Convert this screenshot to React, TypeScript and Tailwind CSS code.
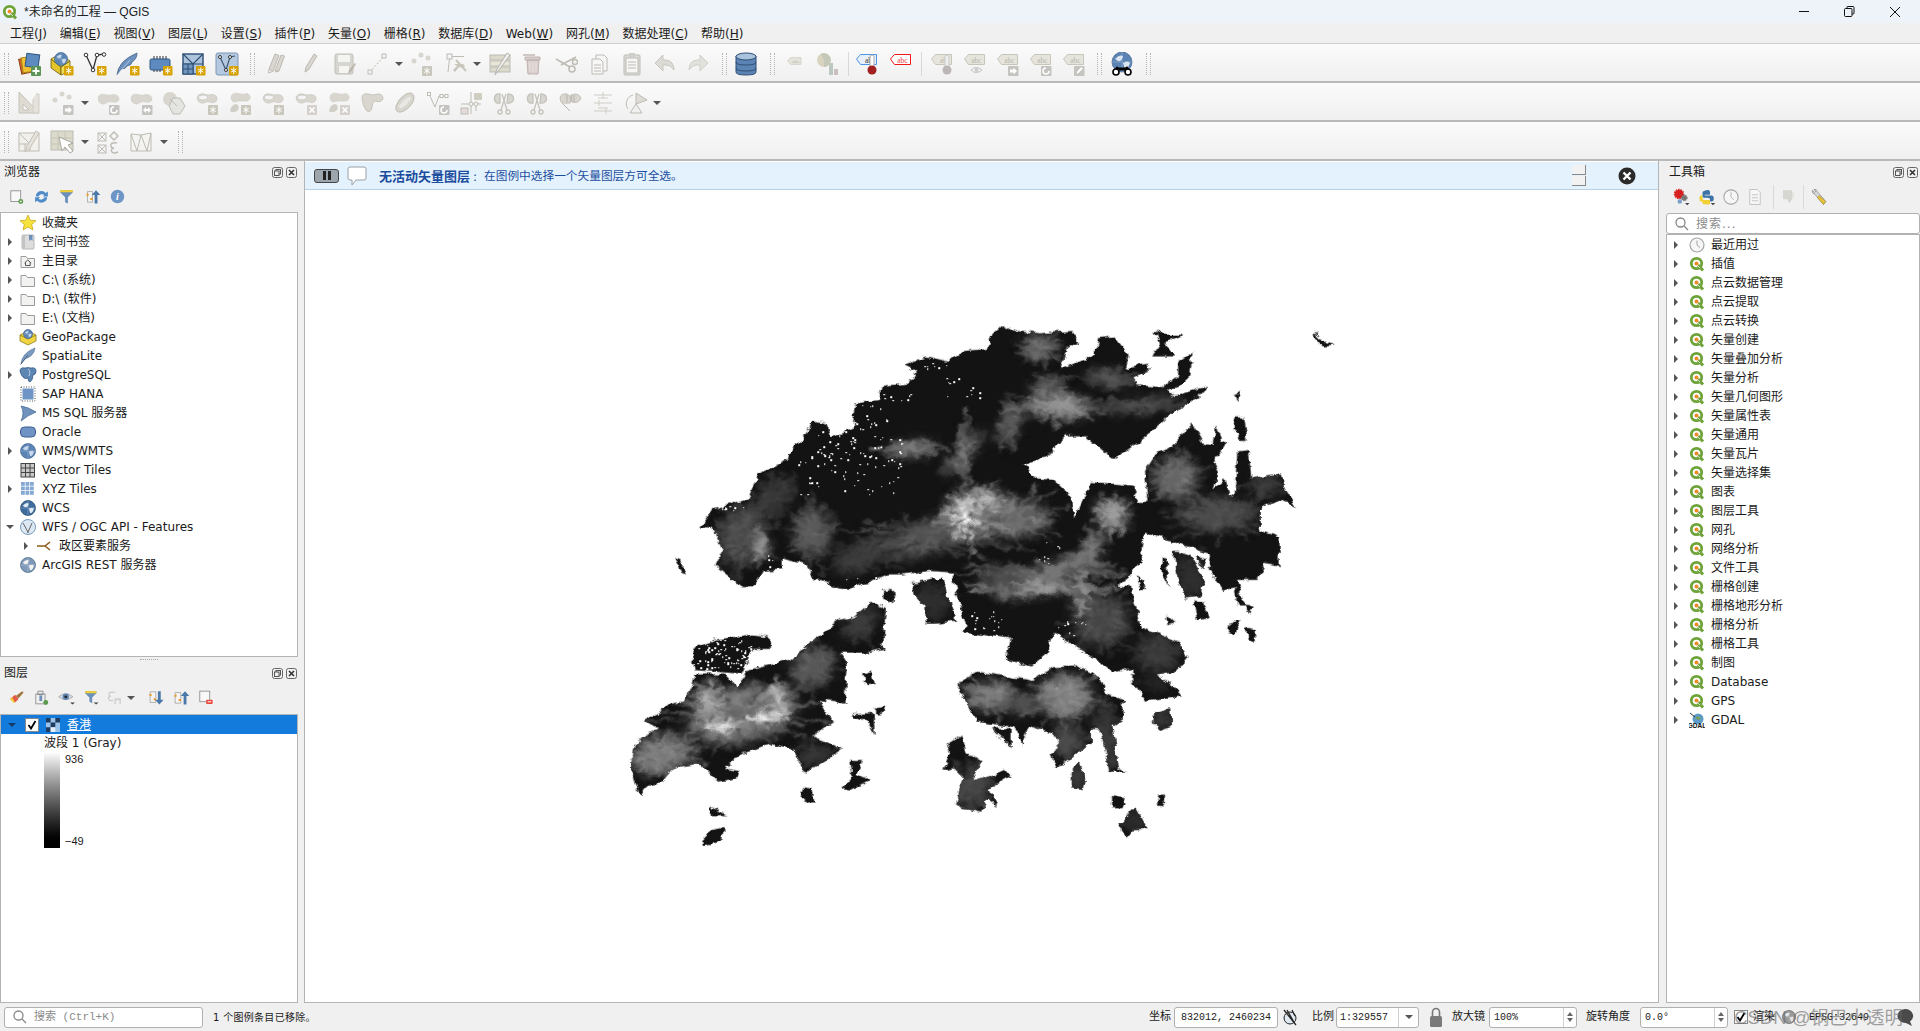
import React from 'react';

// gray colours used by disabled tools
const DF = '#d8d6cf';
const DS = '#bdbbb3';

const Grip = ({ c = 'w-[12px]' }: { c?: string }) => (
  <div className={`flex justify-center shrink-0 ${c}`}>
    <div className="w-[5px] h-[22px] border-x border-dotted border-[#b5b5b5]" />
  </div>
);

const Sep = () => <div className="w-px h-[24px] bg-[#d8d8d8] shrink-0" />;

const Dd = ({ c = 'w-[13px]', dark = false }: { c?: string; dark?: boolean }) => (
  <div className={`flex justify-center shrink-0 ${c}`}>
    <div className={`w-0 h-0 border-x-[4px] border-x-transparent border-t-[4px] ${dark ? 'border-t-[#555]' : 'border-t-[#9a9a9a]'}`} />
  </div>
);

const T = ({ children, c = 'w-[33px]', s = 24 }: { children: React.ReactNode; c?: string; s?: number }) => (
  <div className={`flex items-center justify-center shrink-0 ${c}`}>
    <svg width={s} height={s} viewBox="0 0 24 24">{children}</svg>
  </div>
);

const I16 = ({ children }: { children: React.ReactNode }) => (
  <svg width="18" height="18" viewBox="0 0 18 18" className="shrink-0">{children}</svg>
);

const Badge = () => (
  <g>
    <rect x="14" y="14" width="9.5" height="9.5" rx="1" fill="#d8a200" />
    <path d="M18.7 15.5v6.5M16 17l5.4 3.2M21.4 17L16 20.2" stroke="#fff" strokeWidth="1" />
  </g>
);
const GBadge = () => (
  <g>
    <rect x="13" y="14" width="10" height="10" rx="1" fill="#c9c6bb" />
    <path d="M18 15.5v7M15.2 17.2l5.6 3.4M20.8 17.2l-5.6 3.4" stroke="#fff" strokeWidth="1" />
  </g>
);
const XBadge = () => (
  <g>
    <rect x="13" y="14" width="10" height="10" rx="1" fill="#d6d0cc" />
    <path d="M15.5 16.5l5 5M20.5 16.5l-5 5" stroke="#fff" strokeWidth="1.6" />
  </g>
);
const ArrowBadge = ({ kind }: { kind: 'right' | 'rot' | 'both' | 'pen' }) => (
  <g>
    <rect x="13" y="14" width="10.5" height="10" rx="1" fill="#c4c3bf" />
    {kind === 'right' && <path d="M15 17.5h3.5v-2l3.5 3.5-3.5 3.5v-2H15z" fill="#fff" />}
    {kind === 'rot' && <path d="M21 19a3 3 0 1 1-3-3" fill="none" stroke="#fff" strokeWidth="1.5" />}
    {kind === 'both' && <path d="M14 19l3-3v2h2v-2l3 3-3 3v-2h-2v2z" fill="#fff" />}
    {kind === 'pen' && <path d="M15.5 22l1-3 4-4 1.5 1.5-4 4z" fill="#fff" />}
  </g>
);

const Blob = () => <path d="M2 7Q3 2 9 3.5Q13 5 17 3.5Q23 3.5 23 8.5Q22 12 17 11Q13 10 10 12Q8 14 5 12.5Q2 11 2 7Z" fill={DF} stroke="#cfcdc6" strokeWidth=".6" />;
const Ring = () => (
  <g>
    <path d="M2 7Q3 2 9 3Q13 4.5 17 3.5Q23 4 22 9Q20 13 15 11Q12 10 9 12Q3 13 2 7Z" fill={DF} stroke="#c6c4bc" strokeWidth=".6" />
    <ellipse cx="8" cy="6.5" rx="4.5" ry="2.4" fill="#f4f4f4" stroke="#bdbbb3" strokeWidth=".6" />
  </g>
);
const Parts = () => (
  <g>
    <path d="M3 6Q4 1 10 2.5Q15 4 19 2.5Q23 4 22 8Q20 11 15 10Q10 9.5 7 11Q3 11 3 6Z" fill={DF} stroke="#cfcdc6" strokeWidth=".6" />
    <path d="M2 20Q3 14 8 13Q12 14 10 19Q6 23 2 20Z" fill="#d0cec7" />
  </g>
);
const Abc = ({ fill = '#e6e5dd', stroke = '#c8c6bb', text = '#b7b5ab', label = 'abc' }: { fill?: string; stroke?: string; text?: string; label?: string }) => (
  <g>
    <path d="M2.5 7L6.5 2.5H22.5V12.5H6.5Z" fill={fill} stroke={stroke} strokeWidth="1" />
    <text x="14.5" y="10.5" fontSize="7.5" textAnchor="middle" fontFamily="Liberation Serif" fill={text}>{label}</text>
  </g>
);
const Scissors = () => (
  <g fill="none" stroke="#c4c2ba" strokeWidth="1.3">
    <path d="M8 3Q2 2 2.5 9Q4 13 8 12Z" fill={DF} />
    <path d="M16 3Q22 3 21.5 9Q19 13 15 12Z" fill={DF} />
    <path d="M14 3L9 19M10 3L15 19" />
    <circle cx="8" cy="21" r="2" />
    <circle cx="16" cy="21" r="2" />
  </g>
);
const GlobeArt = ({ cx, cy, r, fill = '#5b84b5', land = '#c8d8ea', stroke = '#3e638f' }: { cx: number; cy: number; r: number; fill?: string; land?: string; stroke?: string }) => (
  <g>
    <circle cx={cx} cy={cy} r={r} fill={fill} stroke={stroke} strokeWidth=".7" />
    <path d={`M${cx - r * 0.7} ${cy - r * 0.3}q${r * 0.4} -${r * 0.5} ${r * 0.8} -${r * 0.3}q-${r * 0.1} ${r * 0.6} -${r * 0.5} ${r * 0.5}zM${cx + r * 0.1} ${cy + r * 0.1}q${r * 0.5} -${r * 0.3} ${r * 0.7} 0q-${r * 0.2} ${r * 0.6} -${r * 0.5} ${r * 0.6}z`} fill={land} />
    <path d={`M${cx} ${cy - r}V${cy + r}M${cx - r} ${cy}H${cx + r}`} stroke={land} strokeWidth=".4" opacity=".7" />
  </g>
);

const Q = () => (
  <svg width="16" height="16" viewBox="0 0 16 16" className="shrink-0">
    <circle cx="7.5" cy="7.5" r="5.2" fill="#fff" stroke="#6ea33a" strokeWidth="2.8" />
    <path d="M9 9l5 5.5" stroke="#6ea33a" strokeWidth="3" />
    <circle cx="7.5" cy="7.5" r="2" fill="#ee8a24" />
    <path d="M8 9l3 3" stroke="#f5f5f5" strokeWidth=".8" />
  </svg>
);

const DockBtns = () => (
  <div className="flex gap-[3px] shrink-0">
    <svg width="11" height="11" viewBox="0 0 11 11"><rect x=".5" y=".5" width="10" height="10" rx="2" fill="none" stroke="#666" /><rect x="4" y="2.5" width="4.5" height="4.5" fill="none" stroke="#555" /><rect x="2.5" y="4" width="4.5" height="4.5" fill="#f0f0f0" stroke="#555" /></svg>
    <svg width="11" height="11" viewBox="0 0 11 11"><rect x=".5" y=".5" width="10" height="10" rx="2" fill="none" stroke="#666" /><path d="M3 3l5 5M8 3l-5 5" stroke="#333" strokeWidth="1.6" /></svg>
  </div>
);

const Arrow = ({ open = false, c = '' }: { open?: boolean; c?: string }) =>
  open ? (
    <div className={`w-0 h-0 border-x-[4px] border-x-transparent border-t-[4px] border-t-[#555] ${c}`} />
  ) : (
    <div className={`w-0 h-0 border-y-[4px] border-y-transparent border-l-[4px] border-l-[#555] ${c}`} />
  );

const Folder = () => <path d="M2 4.5h5l1.5 2H15.5v9H2z" fill="#f2f2f0" stroke="#9b9b9b" />;

const browserRows: { label: string; arrow?: boolean; open?: boolean; child?: boolean; icon: React.ReactNode }[] = [
  { label: '收藏夹', icon: <path d="M9 1l2.3 5.2 5.7.5-4.3 3.7 1.3 5.6L9 13l-5 3 1.3-5.6L1 6.7l5.7-.5z" fill="#f5e23a" stroke="#c9a91f" strokeWidth=".8" /> },
  { label: '空间书签', arrow: true, icon: <g><rect x="3" y="2" width="12" height="14" rx="1" fill="#ddd" stroke="#b8b8b8" /><path d="M3 2h3v14H3z" fill="#c3c3c3" /><path d="M10 2h3.5v6l-1.7-1.5L10 8z" fill="#6d8fbb" /></g> },
  { label: '主目录', arrow: true, icon: <g><Folder /><path d="M5.5 11l3.3-3 3.3 3M6.5 10.5v3h4.7v-3" fill="none" stroke="#444" strokeWidth=".9" /></g> },
  { label: 'C:\\ (系统)', arrow: true, icon: <Folder /> },
  { label: 'D:\\ (软件)', arrow: true, icon: <Folder /> },
  { label: 'E:\\ (文档)', arrow: true, icon: <Folder /> },
  { label: 'GeoPackage', icon: <g><path d="M1 7l8-4 8 4v6l-8 4-8-4z" fill="#f0d543" stroke="#8d7c1a" strokeWidth=".8" /><path d="M1 7l8 4 8-4" fill="none" stroke="#8d7c1a" strokeWidth=".8" /><GlobeArt cx={9} cy={6} r={4.5} /></g> },
  { label: 'SpatiaLite', icon: <g><path d="M2 17Q3 6 16 1Q15 9 6 12Z" fill="#7d9cc2" stroke="#466a96" strokeWidth=".6" /><path d="M1.5 17.5L9 8" stroke="#345" strokeWidth=".6" /></g> },
  { label: 'PostgreSQL', arrow: true, icon: <g><path d="M1 5Q1 1 6 2Q9 1 12 2Q17 1 17 5Q17 9 14 9Q14 14 11 16Q9 16 9 12Q7 13 5 12Q2 10 1 5Z" fill="#5e86b3" stroke="#2f5580" strokeWidth=".7" /><path d="M9 3Q12 5 10 10" fill="none" stroke="#cfe0f0" strokeWidth=".8" /></g> },
  { label: 'SAP HANA', icon: <g><rect x="2" y="2" width="14" height="14" fill="none" stroke="#555" strokeDasharray="1 1.5" /><rect x="3.5" y="3.5" width="11" height="11" fill="#6f95c6" /></g> },
  { label: 'MS SQL 服务器', icon: <path d="M2 2Q9 3 17 8Q9 11 2 17Q6 9 2 2Z" fill="#6f93bd" stroke="#3e638f" strokeWidth=".7" /> },
  { label: 'Oracle', icon: <rect x="1.5" y="4" width="15" height="10" rx="4" fill="#6f93c4" stroke="#3e5f8c" /> },
  { label: 'WMS/WMTS', arrow: true, icon: <GlobeArt cx={9} cy={9} r={7.5} /> },
  { label: 'Vector Tiles', icon: <g><rect x="2" y="2.5" width="13.5" height="13.5" fill="#c9c9c9" stroke="#444" /><path d="M6.5 2.5v13.5M11 2.5v13.5M2 7h13.5M2 11.5h13.5" stroke="#444" /></g> },
  { label: 'XYZ Tiles', arrow: true, icon: <g fill="#86a9d3">{[2, 6.5, 11].flatMap((y) => [2, 6.5, 11].map((x) => <rect key={`${x}-${y}`} x={x} y={y} width="3.8" height="3.8" />))}</g> },
  { label: 'WCS', icon: <GlobeArt cx={9} cy={9} r={7.5} fill="#3f6c9e" land="#dfe9f3" stroke="#244567" /> },
  { label: 'WFS / OGC API - Features', arrow: true, open: true, icon: <g><circle cx="9" cy="9" r="7.5" fill="#dbe7f3" stroke="#7a9cc2" /><path d="M4 5l5 9 4-9" fill="none" stroke="#666" /><circle cx="9" cy="14" r="1" fill="#777" /></g> },
  { label: '政区要素服务', arrow: true, child: true, icon: <path d="M1 9h8M9 9l5-4M9 9l5 4" stroke="#8b5a14" strokeWidth="1.6" fill="none" /> },
  { label: 'ArcGIS REST 服务器', icon: <GlobeArt cx={9} cy={9} r={7.5} fill="#7e99b8" land="#f2f2f2" stroke="#45617f" /> },
];

const toolboxRows = ['插值', '点云数据管理', '点云提取', '点云转换', '矢量创建', '矢量叠加分析', '矢量分析', '矢量几何图形', '矢量属性表', '矢量通用', '矢量瓦片', '矢量选择集', '图表', '图层工具', '网孔', '网络分析', '文件工具', '栅格创建', '栅格地形分析', '栅格分析', '栅格工具', '制图', 'Database', 'GPS'];

const menus: [string, string][] = [['工程', 'J'], ['编辑', 'E'], ['视图', 'V'], ['图层', 'L'], ['设置', 'S'], ['插件', 'P'], ['矢量', 'O'], ['栅格', 'R'], ['数据库', 'D'], ['Web', 'W'], ['网孔', 'M'], ['数据处理', 'C'], ['帮助', 'H']];

// land outlines, traced in the coordinates of the 1568x1568 viewBox
const land = [
  '850,65 880,85 930,92 1000,85 1018,118 990,130 975,190 1050,150 1055,105 1090,100 1120,150 1115,185 1160,175 1165,195 1130,215 1140,235 1195,240 1215,265 1290,235 1270,265 1225,300 1190,340 1130,400 1090,437 1060,410 1030,375 985,375 960,420 900,455 925,490 960,495 1000,540 1005,600 1040,500 1130,510 1140,555 1160,555 1155,470 1180,420 1215,400 1255,340 1280,395 1300,400 1305,345 1325,400 1300,450 1310,475 1300,520 1325,490 1335,540 1345,530 1350,420 1375,415 1380,490 1445,480 1450,520 1475,570 1440,550 1400,570 1400,630 1440,655 1440,735 1410,725 1395,770 1350,770 1365,840 1350,840 1345,790 1320,800 1290,740 1295,700 1155,640 1150,660 1145,720 1115,770 1095,785 1125,790 1145,900 1225,940 1245,985 1220,1020 1180,1030 1215,1060 1235,1090 1155,1105 1130,1055 1130,1015 1085,1025 1050,990 960,915 945,975 915,1005 860,990 870,930 770,915 775,890 745,750 700,745 640,755 610,755 530,795 505,790 470,770 455,770 435,730 385,710 385,740 345,745 325,790 300,790 245,730 260,690 240,630 210,625 240,575 315,545 335,480 400,440 405,410 440,370 450,330 480,340 490,375 535,355 540,285 590,275 600,235 655,230 670,195 645,180 690,155 740,170 770,140 820,135 830,90',
  '200,1030 265,1030 290,1065 310,1020 400,990 430,960 510,880 540,870 575,830 605,850 600,960 560,970 510,970 525,1000 520,1110 465,1100 495,1160 450,1200 515,1235 480,1265 435,1300 410,1240 360,1220 290,1255 265,1290 295,1295 290,1315 250,1325 210,1275 160,1285 130,1330 100,1340 85,1365 65,1290 70,1235 95,1200 125,1180 95,1155 130,1130 150,1110 180,1105 195,1065',
  '195,960 240,935 325,920 360,925 360,960 325,960 300,1028 200,1018',
  '755,1055 800,1022 920,1048 960,1010 1010,1008 1060,1040 1075,1085 1108,1100 1110,1150 1085,1170 1100,1290 1120,1300 1080,1300 1060,1180 1040,1180 1040,1220 1000,1260 965,1290 955,1250 975,1230 960,1190 910,1170 895,1225 880,1175 800,1160 780,1110',
  '735,1220 765,1195 775,1250 810,1265 790,1325 860,1295 870,1310 825,1345 845,1395 820,1370 810,1410 770,1400 755,1385 770,1310 750,1285 725,1295 740,1250',
  '1515,85 1525,110 1555,125 1530,128 1515,105',
  '1175,85 1190,95 1240,95 1200,115 1215,155 1170,155 1185,125',
  '1225,170 1255,145 1255,185 1250,210 1225,240 1195,250 1195,235 1225,210',
  '1345,260 1360,252 1350,280',
  '1345,320 1365,320 1372,385 1355,385 1340,350',
  '160,710 172,715 182,755 172,750',
  '600,798 620,795 625,830 610,838 600,820',
  '660,780 725,765 755,885 710,890 690,890 690,840 665,810',
  '1190,710 1200,710 1205,790 1190,750',
  '1215,690 1225,690 1250,700 1280,770 1275,815 1240,820 1225,770',
  '1265,705 1285,710 1280,740 1265,725',
  '1135,760 1150,770 1155,795 1145,795',
  '1200,865 1220,890 1205,895',
  '1258,830 1280,832 1292,875 1265,880',
  '1335,890 1355,880 1345,920 1332,920',
  '1370,900 1385,905 1388,945 1375,940',
  '1365,838 1385,840 1378,865',
  '555,1030 575,1022 580,1055 565,1060',
  '585,1120 605,1115 600,1135 585,1138',
  '535,1140 580,1135 582,1195 570,1165',
  '530,1265 555,1265 545,1305 570,1320 530,1350 512,1345 535,1310',
  '430,1340 450,1345 455,1385 440,1385 425,1365',
  '235,1392 270,1420 232,1420',
  '240,1458 262,1455 258,1490 220,1500 218,1480',
  '830,1178 870,1178 870,1230',
  '1000,1295 1015,1270 1030,1320 1025,1345 1000,1340',
  '1085,1365 1112,1370 1105,1395 1085,1395',
  '1185,1365 1195,1362 1195,1390 1182,1388',
  '1100,1445 1135,1395 1160,1455 1130,1455 1115,1480',
  '1175,1135 1210,1120 1212,1170 1190,1185 1172,1165',
];

// [cx, cy, rx, ry, rotation, fill] of the high ground, soft blobs under a blur
const relief: [number, number, number, number, number, string][] = [
  [300, 650, 45, 80, 10, '#4a4a4a'], [370, 540, 30, 55, 20, '#383838'], [450, 640, 36, 65, 0, '#585858'], [340, 680, 9, 30, 0, '#9a9a9a'],
  [700, 650, 130, 42, -20, '#505050'], [560, 700, 70, 32, -35, '#3a3a3a'], [870, 600, 80, 50, 0, '#666'], [790, 590, 55, 62, 0, '#8f8f8f'], [772, 597, 20, 34, 0, '#fff'], [820, 545, 24, 20, 0, '#bbb'],
  [660, 410, 50, 16, -12, '#7d7d7d'], [770, 420, 11, 68, 30, '#7a7a7a'], [870, 340, 16, 55, 20, '#5f5f5f'], [930, 128, 32, 30, 0, '#6d6d6d'], [975, 290, 66, 30, 8, '#8f8f8f'], [950, 235, 26, 20, 0, '#5f5f5f'],
  [1080, 215, 45, 17, 15, '#5a5a5a'], [1150, 290, 80, 13, -10, '#505050'], [1220, 490, 44, 55, 0, '#646464'], [1310, 590, 80, 42, 0, '#484848'], [1410, 510, 30, 22, 0, '#424242'],
  [1085, 590, 28, 38, 0, '#9b9b9b'], [1040, 690, 16, 48, 20, '#7a7a7a'], [950, 750, 105, 18, -25, '#777'], [930, 795, 95, 11, -10, '#9c9c9c'], [1020, 810, 9, 40, -15, '#aaa'], [850, 770, 40, 34, 0, '#4c4c4c'],
  [1060, 880, 55, 70, -15, '#444'], [1180, 970, 45, 45, 0, '#383838'], [1180, 1050, 26, 26, 0, '#262626'],
  [300, 1140, 115, 72, -20, '#646464'], [230, 1110, 26, 44, 0, '#a8a8a8'], [380, 1100, 12, 33, -5, '#c4c4c4'], [350, 1148, 28, 11, -5, '#f4f4f4'], [262, 1172, 20, 10, 0, '#fff'], [130, 1250, 66, 48, -25, '#767676'], [450, 1010, 40, 55, 20, '#555'], [550, 890, 26, 46, 30, '#3c3c3c'], [450, 1250, 30, 26, 0, '#3a3a3a'],
  [830, 1090, 46, 36, 0, '#787878'], [985, 1090, 56, 56, 0, '#7a7a7a'], [900, 1110, 36, 24, 0, '#505050'], [990, 1215, 30, 40, 0, '#4a4a4a'], [1075, 1210, 20, 78, -8, '#3c3c3c'],
  [790, 1340, 34, 56, 10, '#454545'], [1015, 1310, 18, 28, 0, '#3c3c3c'], [700, 830, 36, 46, 0, '#2e2e2e'], [1250, 760, 26, 56, 0, '#303030'], [1190, 1150, 22, 26, 0, '#383838'], [1130, 1430, 26, 26, 0, '#2c2c2c'],
];

// white nodata specks over the low ground: [x, y, w, h, count]
const speckAreas: [number, number, number, number, number][] = [
  [420, 360, 220, 175, 100], [540, 285, 70, 85, 16], [600, 240, 60, 40, 8], [655, 170, 80, 20, 8], [730, 190, 75, 80, 14], [250, 565, 65, 15, 8],
  [205, 935, 115, 80, 80], [780, 850, 70, 60, 18], [930, 660, 45, 65, 8], [320, 700, 60, 70, 8], [510, 755, 100, 18, 5], [960, 880, 70, 50, 10],
];

let seed = 42;
const rnd = () => {
  seed = (seed * 16807) % 2147483647;
  return seed / 2147483647;
};

const specks = speckAreas.flatMap(([x, y, w, h, n]) =>
  Array.from({ length: n }, () => [Math.round(x + rnd() * w), Math.round(y + rnd() * h)])
);

// ridges and valleys fanning out of every high spot, the noise filter makes them branch
const spokes = relief.flatMap(([cx, cy, rx, ry, , fill]) => {
  const n = 7 + Math.round(Math.max(rx, ry) / 7);
  return Array.from({ length: n * 2 }, (_, i) => {
    const a = (i / (n * 2)) * Math.PI * 2 + rnd() * 0.3;
    const len = 1.1 + rnd() * 0.9;
    const ridge = i % 2 === 0;
    return {
      x1: cx + Math.cos(a) * rx * (ridge ? 0.1 : 0.45),
      y1: cy + Math.sin(a) * ry * (ridge ? 0.1 : 0.45),
      x2: cx + Math.cos(a) * rx * len,
      y2: cy + Math.sin(a) * ry * len,
      stroke: ridge ? fill : '#0c0c0c',
      ridge,
    };
  });
});

const HongKong = () => (
  <svg viewBox="0 0 1568 1568" preserveAspectRatio="none" className="absolute left-[295px] top-[139px] w-[740px] h-[570px]">
    <defs>
      <clipPath id="land">
        {land.map((p, i) => <polygon key={i} points={p} />)}
      </clipPath>
      <filter id="soft" x="-10%" y="-10%" width="120%" height="120%" colorInterpolationFilters="sRGB">
        <feGaussianBlur stdDeviation="14" result="b" />
        <feTurbulence type="fractalNoise" baseFrequency="0.035" numOctaves="3" seed="3" result="n" />
        <feDisplacementMap in="b" in2="n" scale="26" xChannelSelector="R" yChannelSelector="G" />
        <feComponentTransfer>
          <feFuncR type="linear" slope="1.3" />
          <feFuncG type="linear" slope="1.3" />
          <feFuncB type="linear" slope="1.3" />
        </feComponentTransfer>
      </filter>
      <filter id="ridge" x="-10%" y="-10%" width="120%" height="120%" colorInterpolationFilters="sRGB">
        <feTurbulence type="fractalNoise" baseFrequency="0.05" numOctaves="3" seed="11" result="n" />
        <feDisplacementMap in="SourceGraphic" in2="n" scale="30" xChannelSelector="R" yChannelSelector="G" />
        <feGaussianBlur stdDeviation="3" />
      </filter>
      <filter id="rough" x="-5%" y="-5%" width="110%" height="110%" colorInterpolationFilters="sRGB">
        <feTurbulence type="fractalNoise" baseFrequency="0.045" numOctaves="4" seed="7" result="n" />
        <feDisplacementMap in="SourceGraphic" in2="n" scale="18" xChannelSelector="R" yChannelSelector="G" />
      </filter>
    </defs>
    <g filter="url(#rough)">
      <g clipPath="url(#land)">
        <rect width="1568" height="1568" fill="#131313" />
        <g filter="url(#soft)">
          {relief.map(([cx, cy, rx, ry, r, fill], i) => (
            <ellipse key={i} cx={cx} cy={cy} rx={rx} ry={ry} fill={fill} transform={`rotate(${r} ${cx} ${cy})`} />
          ))}
        </g>
        <g filter="url(#ridge)" strokeLinecap="round">
          {spokes.map((l, i) => (
            <line key={i} x1={l.x1} y1={l.y1} x2={l.x2} y2={l.y2} stroke={l.stroke} strokeWidth={l.ridge ? 6 : 4} strokeOpacity={l.ridge ? 0.8 : 0.4} />
          ))}
        </g>
      </g>
    </g>
    <g fill="#fff" shapeRendering="crispEdges">
      {specks.map(([x, y], i) => <rect key={i} x={x} y={y} width="3.2" height="4" />)}
    </g>
  </svg>
);

const Spin = ({ value, c }: { value: string; c: string }) => (
  <div className={`flex items-center h-[21px] bg-white border border-[#b0b0b0] rounded-[3px] shrink-0 ${c}`}>
    <span className="flex-1 pl-[4px] text-[10px] font-['Liberation_Mono','Noto_Sans_CJK_SC',monospace] text-[#222]">{value}</span>
    <div className="w-[13px] h-full border-l border-[#d0d0d0] flex flex-col items-center justify-center gap-[2px]">
      <div className="w-0 h-0 border-x-[3.5px] border-x-transparent border-b-[4px] border-b-[#666]" />
      <div className="w-0 h-0 border-x-[3.5px] border-x-transparent border-t-[4px] border-t-[#666]" />
    </div>
  </div>
);

const Toolbar = ({ children }: { children: React.ReactNode }) => (
  <div className="h-[39px] shrink-0 flex items-center pt-[2px] bg-gradient-to-b from-[#fbfbfb] to-[#f0f0f0] border-b-2 border-[#b9b9b9]">{children}</div>
);

export default function App() {
  return (
    <div className="w-full h-screen flex flex-col overflow-hidden bg-[#f0f0f0] text-[12px] text-[#1a1a1a] font-['DejaVu_Sans','Noto_Sans_CJK_SC',sans-serif]">
      {/* title */}
      <div className="h-[23px] shrink-0 bg-[#eef3fa] flex items-center pl-[2px]">
        <Q />
        <span className="ml-[6px] text-[#222] font-['Liberation_Sans','Noto_Sans_CJK_SC',sans-serif]">*未命名的工程 — QGIS</span>
        <div className="ml-auto flex items-center">
          <div className="w-[45px] flex justify-center"><div className="w-[10px] h-px bg-[#111]" /></div>
          <div className="w-[46px] flex justify-center">
            <svg width="11" height="11" viewBox="0 0 11 11" fill="none" stroke="#111"><rect x=".5" y="2.5" width="7.5" height="8" rx="1" /><path d="M3 2.5V1a.5.5 0 0 1 .5-.5H9a1 1 0 0 1 1 1V7a1 1 0 0 1-1 1H8" /></svg>
          </div>
          <div className="w-[46px] flex justify-center">
            <svg width="12" height="12" viewBox="0 0 12 12" stroke="#111"><path d="M1 1l10 10M11 1L1 11" /></svg>
          </div>
          <div className="w-[2px]" />
        </div>
      </div>

      {/* menu */}
      <div className="h-[21px] shrink-0 flex items-center pl-[10px] pt-px gap-[12.8px] border-b border-[#d0d0d0] bg-[#f0f0f0]">
        {menus.map(([name, key]) => (
          <span key={key} className="whitespace-nowrap">{name}(<u>{key}</u>)</span>
        ))}
      </div>

      <Toolbar>
        <Grip />
        <T>
          <rect x="3" y="6" width="12" height="15" fill="#d9662b" stroke="#8c3c12" transform="rotate(-12 9 13)" />
          <rect x="5" y="5" width="12" height="15" fill="#f0c030" stroke="#a88418" transform="rotate(-8 11 12)" />
          <rect x="9" y="2" width="13" height="13" fill="#5d8bc0" stroke="#2f5580" transform="rotate(8 15 8)" />
          <rect x="14" y="14" width="10" height="10" rx="1" fill="#5a9456" />
          <path d="M19 15.5v7M15.5 19h7" stroke="#fff" strokeWidth="1.8" />
        </T>
        <T>
          <path d="M1 7l10 8v8L1 16z" fill="#e5c52c" stroke="#6b5c10" strokeWidth=".8" />
          <path d="M11 15l9-6v10l-9 4z" fill="#f2dc50" stroke="#6b5c10" strokeWidth=".8" />
          <path d="M1 7l9-5 10 7-9 6z" fill="#ecd544" stroke="#6b5c10" strokeWidth=".8" />
          <GlobeArt cx={11} cy={7} r={6.5} />
          <Badge />
        </T>
        <T>
          <path d="M3 3l7 15 4-15 7-1" fill="none" stroke="#333" strokeWidth="1.3" />
          <circle cx="3" cy="3" r="1.8" fill="#fff" stroke="#333" /><circle cx="10" cy="18" r="1.8" fill="#fff" stroke="#333" /><circle cx="14" cy="3" r="1.8" fill="#fff" stroke="#333" /><circle cx="21" cy="2.5" r="1.8" fill="#fff" stroke="#333" />
          <Badge />
        </T>
        <T>
          <path d="M1 23Q2 9 21 1Q21 7 16 10Q16 13 11 14Q10 17 5 17Z" fill="#6d92bf" stroke="#35597f" strokeWidth=".7" />
          <path d="M1 23L14 8" stroke="#c7d8ea" strokeWidth=".7" />
          <Badge />
        </T>
        <T>
          <path d="M5 4v3M8 4v3M11 4v3M14 4v3M17 4v3M5 17v3M8 17v3M11 17v3" stroke="#333" />
          <rect x="1" y="7" width="20" height="11" rx="1.5" fill="#5d8bc0" stroke="#2f5580" />
          <Badge />
        </T>
        <T>
          <rect x="1" y="2" width="20" height="20" fill="#aec4dc" stroke="#2d4e75" strokeWidth="1.4" />
          <path d="M1 2l10 10 10-10M1 12h20M11 12v10" fill="none" stroke="#2d4e75" strokeWidth="1.2" />
          <path d="M1 12h10v10H1z" fill="#7096bf" stroke="#2d4e75" /><path d="M1 17h10M6 12v10" stroke="#2d4e75" />
          <Badge />
        </T>
        <T>
          <rect x="1" y="1" width="22" height="22" rx="2" fill="#b4c8df" stroke="#7d97b5" />
          <path d="M5 5l6 13 4-13 5-1" fill="none" stroke="#3c5878" strokeWidth="1.2" />
          <circle cx="5" cy="5" r="1.5" fill="#fff" stroke="#333" /><circle cx="11" cy="18" r="1.5" fill="#fff" stroke="#333" /><circle cx="15" cy="5" r="1.5" fill="#fff" stroke="#333" />
          <Badge />
        </T>
        <Grip c="w-[18px]" />
        <T><path d="M3 17L9 2l4 1.5-6 16zM9 19l6-16 3.5 1L13 19z" fill={DF} stroke={DS} /><path d="M3 17l-.5 4 4-1.500M9 20l4-1" stroke={DS} fill="none" /></T>
        <T><path d="M6 20l1-5L15 2l3 2-8 13z" fill={DF} stroke={DS} /><path d="M6 20l4-3" stroke={DS} /></T>
        <T><rect x="3" y="2" width="18" height="20" rx="1.5" fill="#d7d5cf" stroke="#c2c0b9" /><rect x="6" y="3" width="12" height="7" fill="#f4f4f0" /><rect x="7" y="14" width="10" height="7" fill="#f4f4f0" /><path d="M16 22l1-4 6-7 1 1-5 8z" fill="#bcb8ad" /></T>
        <T><path d="M5 20L19 4" stroke={DS} strokeDasharray="2 1.5" /><rect x="3" y="18" width="4" height="4" fill="#f4f4f4" stroke={DS} /><rect x="17" y="2" width="4" height="4" fill="#f4f4f4" stroke={DS} /></T>
        <Dd c="w-[11px]" dark />
        <T><circle cx="12" cy="3" r="2.5" fill={DF} /><circle cx="19" cy="6" r="2.5" fill={DF} /><circle cx="5" cy="9" r="2.5" fill={DF} /><GBadge /></T>
        <div className="w-[9px] shrink-0" />
        <T c="w-[24px]"><rect x="1" y="2" width="5" height="5" fill="#f4f4f4" stroke={DS} /><path d="M3.5 7L2 20M6 4.5h12" stroke={DS} /><path d="M8 12h9l2 2-2 2-4-1-4 5-2-2 4-4z" fill="#c9c6bb" /><path d="M10 8l10 11" stroke="#c9c6bb" strokeWidth="2" /></T>
        <Dd dark />
        <T><rect x="2" y="3" width="20" height="5" fill="#dcdacb" stroke={DS} /><rect x="2" y="9" width="20" height="5" fill="#e8e6d8" stroke={DS} /><rect x="2" y="15" width="20" height="5" fill="#dcdacb" stroke={DS} /><path d="M7 23l2-6L19 1l3 2-11 15z" fill="#eee" stroke="#b5b3ab" /></T>
        <T><path d="M4 5h15v3H4zM6 8l1 14h10l1-14z" fill="#d9cfcc" stroke="#bfb3af" /><path d="M2 2h12v2H2z" fill="#cfc7c4" /><path d="M9 10v10M12 10v10M15 10v10" stroke="#ebe4e2" /></T>
        <T><path d="M2 7l14 8M22 5L7 13" stroke={DS} strokeWidth="1.5" /><circle cx="18" cy="17" r="3" fill="none" stroke={DS} strokeWidth="1.5" /><circle cx="21" cy="10" r="2.5" fill="none" stroke={DS} strokeWidth="1.5" /></T>
        <T><path d="M9 3h8l3 3v13H9z" fill="#f6f6f6" stroke={DS} /><path d="M5 7h8l3 3v12H5z" fill="#f6f6f6" stroke={DS} /><path d="M7 13h7M7 16h7M7 19h7" stroke={DS} /></T>
        <T><rect x="4" y="3" width="16" height="20" rx="1" fill="#dcdcd8" stroke={DS} /><rect x="6" y="6" width="12" height="15" fill="#f6f6f6" stroke={DS} /><rect x="9" y="1" width="6" height="4" fill="#cfcfca" /><path d="M8 10h8M8 13h8M8 16h8" stroke={DS} /></T>
        <T><path d="M2 11l8-8v5h3q8 1 8 10q-3-5-8-5h-3v6z" fill="#dcdad4" stroke="#c9c7c0" /></T>
        <T><path d="M22 11l-8-8v5h-3q-8 1-8 10q3-5 8-5h3v6z" fill="#e2e2dc" stroke="#cfcfc8" /></T>
        <Grip c="w-[20px]" />
        <T c="w-[24px]">
          <path d="M2 4v16q0 3 10 3t10-3V4z" fill="#5b84b5" stroke="#2f4d72" />
          <ellipse cx="12" cy="4.5" rx="10" ry="3.5" fill="#a9c2de" stroke="#2f4d72" />
          <path d="M2 10q0 3 10 3t10-3M2 16q0 3 10 3t10-3" fill="none" stroke="#2f4d72" />
        </T>
        <Grip c="w-[28px]" />
        <T c="w-[16px]"><Abc /></T>
        <div className="w-[6px] shrink-0" />
        <T c="w-[40px]"><circle cx="8" cy="8" r="7" fill="#d8d4c0" /><path d="M8 8l-3-6a7 7 0 0 1 9 3zM8 8l6-3a7 7 0 0 1-6 10z" fill="#c3c8b8" /><rect x="13" y="11" width="4" height="12" fill="#bcc7c0" /><rect x="18" y="17" width="4" height="6" fill="#c9c0c0" /></T>
        <Sep />
        <T c="w-[34px]">
          <Abc fill="#e6f0fb" stroke="#4b94e8" text="#333" label="ab" />
          <rect x="16" y="3" width="4" height="14" rx="2" fill="#fff" stroke="#aaa" /><circle cx="18" cy="18" r="4.5" fill="#a32020" />
        </T>
        <T><Abc fill="#fff" stroke="#f01818" text="#f04040" /></T>
        <div className="w-[5px] shrink-0" />
        <Sep />
        <div className="w-[2.5px] shrink-0" />
        <T><Abc label="ab" /><rect x="16" y="3" width="4" height="14" rx="2" fill="#eee" stroke="#ccc" /><circle cx="18" cy="18" r="4.5" fill="#bdb6b6" /></T>
        <T><Abc /><path d="M9 18q5-5 11 0q-6 5-11 0z" fill="#f5f5f5" stroke="#c0c0c0" /><circle cx="14.5" cy="18" r="2" fill="#ccc" /></T>
        <T><Abc /><ArrowBadge kind="right" /></T>
        <T><Abc /><ArrowBadge kind="rot" /></T>
        <T><Abc /><ArrowBadge kind="pen" /></T>
        <Grip c="w-[20px]" />
        <T c="w-[24px]">
          <GlobeArt cx={12} cy={10} r={10} fill="#5b84b5" land="#dbe5f0" />
          <path d="M8 15l-3 5M16 15l3 5M9 17h6" stroke="#000" strokeWidth="3" />
          <circle cx="6" cy="20" r="3" fill="#fff" stroke="#000" strokeWidth="1.6" /><circle cx="18" cy="20" r="3" fill="#fff" stroke="#000" strokeWidth="1.6" />
        </T>
        <Grip c="w-[30px]" />
      </Toolbar>

      <Toolbar>
        <Grip />
        <T><path d="M2 1l20 21H2z" fill="#dedbd3" stroke="#c5c2b9" /><path d="M6 13l6 6H6z" fill="#f4f4f4" stroke="#c5c2b9" /><path d="M16 8v14h6V3h-3" fill="#e4e2da" stroke="#cfcdc4" /></T>
        <T><circle cx="12" cy="3" r="2.5" fill={DF} /><circle cx="19" cy="6" r="2.5" fill={DF} /><circle cx="5" cy="9" r="2.5" fill={DF} /><ArrowBadge kind="right" /></T>
        <Dd dark />
        <T><Blob /><ArrowBadge kind="rot" /></T>
        <T><Blob /><ArrowBadge kind="both" /></T>
        <T><circle cx="8" cy="8" r="7" fill={DF} /><path d="M11 7h7l5 8-5 8h-7l-4-8z" fill="#e4e4e0" stroke={DS} /><path d="M8 8l7 7" stroke={DS} /></T>
        <T><Ring /><GBadge /></T>
        <T><Parts /><GBadge /></T>
        <T><Ring /><GBadge /></T>
        <T><Ring /><XBadge /></T>
        <T><Parts /><XBadge /></T>
        <T><path d="M2 7Q2 2 8 3Q13 5 18 3Q23 3 23 8Q21 12 15 10Q12 11 12 16Q11 22 7 20Q3 16 2 7Z" fill={DF} stroke="#c6c4bc" /></T>
        <T><path d="M3 15Q5 8 13 3Q20 0 21 6Q21 12 14 18Q7 23 4 20Q2 18 3 15Z" fill={DF} stroke="#bdbbb3" /><path d="M6 15Q9 10 15 6Q18 5 18 8Q15 13 9 17Q6 18 6 15Z" fill="#e9e8e3" /></T>
        <T><path d="M3 3l6 13 4-11h6" fill="none" stroke={DS} /><rect x="1.5" y="1.5" width="3" height="3" fill="#fff" stroke={DS} /><rect x="14" y="3.5" width="3" height="3" fill="#fff" stroke={DS} /><rect x="19" y="3.5" width="3" height="3" fill="#fff" stroke={DS} /><ArrowBadge kind="rot" /></T>
        <T><path d="M12 1v22M2 13h20M17 12v8" stroke={DS} /><circle cx="12" cy="13" r="2" fill="#f4f4f4" stroke={DS} /><circle cx="17" cy="13" r="2" fill="#f4f4f4" stroke={DS} /><rect x="15" y="2" width="8" height="7" rx="1" fill="#d0cdc3" /><rect x="2" y="17" width="7" height="6" fill="#e4dcda" stroke={DS} /></T>
        <T><Scissors /></T>
        <T><Scissors /></T>
        <T><path d="M2 7Q3 2 9 3Q12 4 13 8L12 12Q6 13 3 11Z" fill={DF} stroke="#c4c2ba" /><path d="M13 4Q20 1 23 7Q21 13 14 11Z" fill={DF} stroke="#c4c2ba" /><path d="M9 4v7M13 4v7M16 4v7M4 12l8 8" stroke="#b5b3ab" /></T>
        <T><path d="M3 4h18M3 12h18M3 20h18M12 1v7M8 9v6M15 17v6M7 7h10M7 17h10" stroke="#cfcdc6" /></T>
        <T><path d="M9 4a9 9 0 0 0-5 14" fill="none" stroke={DS} /><path d="M12 2l11 7-11 4z" fill="#dedcd6" stroke={DS} /><path d="M12 13l6 9H6z" fill="#f0f0f0" stroke={DS} /></T>
        <Dd c="w-[9px]" dark />
      </Toolbar>

      <Toolbar>
        <Grip />
        <T><rect x="2" y="3" width="20" height="18" fill="#f1f0ea" stroke={DS} /><path d="M2 3l11 11M2 14h11v7M8 14v7" stroke={DS} fill="none" /><path d="M8 22l2-6L19 1l3 2-9 15z" fill="#e4e2da" stroke="#c5c2b9" /></T>
        <T><rect x="1" y="1" width="22" height="19" fill="#dbdacb" stroke={DS} /><path d="M1 8h22M8 1v19M15 1v19M1 14h22" stroke="#c8c6b8" /><path d="M9 7l14 6-5 2 5 6-3 2-5-6-3 4z" fill="#fff" stroke="#a9a79f" /></T>
        <Dd dark />
        <T><rect x="2" y="3" width="8" height="8" fill="#f4f4f4" stroke={DS} /><path d="M2 3l8 8M10 3l-8 8" stroke={DS} /><rect x="2" y="15" width="8" height="8" fill="#f4f4f4" stroke={DS} /><path d="M2 15l8 8M10 15l-8 8" stroke={DS} /><path d="M18 2l4 4-4 4-4-4zM21 13q-7-1-6 3q0 2 3 2q-4 1-2 4q2 2 6 0" fill="none" stroke={DS} strokeWidth="1.4" /></T>
        <T><path d="M2 4l10 1 10-2v18H2zM2 4l6 17 4-16 6 16M22 3l-4 18" fill="#f4f4f0" stroke={DS} /></T>
        <Dd dark />
        <Grip c="w-[20px]" />
      </Toolbar>

      {/* main */}
      <div className="flex-1 flex min-h-0">
        {/* left docks */}
        <div className="w-[304px] shrink-0 flex flex-col pr-[6px]">
          <div className="h-[22px] shrink-0 flex items-center justify-between pl-[4px] pr-[1px]"><span>浏览器</span><DockBtns /></div>
          <div className="h-[29px] shrink-0 flex items-center pl-[4px] pb-[3px]">
            <T s={17} c="w-[25px]"><rect x="4" y="4" width="14" height="15" fill="#f8f8f8" stroke="#777" /><circle cx="18" cy="19" r="3.5" fill="#5b9a4c" /><path d="M16.5 19h3M18 17.5v3" stroke="#fff" /></T>
            <T s={17} c="w-[25px]"><path d="M4 12a8 8 0 0 1 14-5l3-2v7h-7l2-2a5 5 0 0 0-8 2zM20 13a8 8 0 0 1-14 5l-3 2v-7h7l-2 2a5 5 0 0 0 8-2z" fill="#4f8bc8" /></T>
            <T s={17} c="w-[25px]"><path d="M3 3h18v3l-7 7v9l-4-2v-7L3 6z" fill="#6b90bc" /><path d="M3 3h18v3H3z" fill="#f2cf33" /></T>
            <T s={17} c="w-[26px]"><path d="M5 5h7v15H5z" fill="#f4f4f4" stroke="#999" /><rect x="3.5" y="8" width="3" height="3" fill="#ee9a24" /><rect x="9" y="14" width="3" height="3" fill="#ee9a24" /><path d="M15 22V10h-4l6-7 6 7h-4v12z" fill="#4a78a8" /></T>
            <T s={17} c="w-[25px]"><circle cx="12" cy="12" r="9.5" fill="#6d96c6" /><text x="12" y="17" fontSize="14" fontStyle="italic" fontWeight="bold" textAnchor="middle" fill="#fff" fontFamily="Liberation Serif">i</text></T>
          </div>
          <div className="h-[445px] shrink-0 bg-white border border-[#b4b4b4] overflow-hidden">
            {browserRows.map((r) => (
              <div key={r.label} className="h-[19px] flex items-center relative whitespace-nowrap">
                <div className={`flex justify-center shrink-0 ${r.child ? 'w-[35px] pl-[14px]' : 'w-[17px]'}`}>
                  {r.arrow && <Arrow open={r.open} />}
                </div>
                <div className={r.child ? '' : 'ml-px'}><I16>{r.icon}</I16></div>
                <span className="ml-[5px]">{r.label}</span>
              </div>
            ))}
          </div>
          <div className="h-[5px] shrink-0 flex justify-center items-center"><div className="w-[18px] border-t border-dotted border-[#aaa]" /></div>
          <div className="h-[22px] shrink-0 flex items-center justify-between pl-[4px] pr-[1px]"><span>图层</span><DockBtns /></div>
          <div className="h-[30px] shrink-0 flex items-center pl-[4px] pb-[3px]">
            <T s={17} c="w-[25px]"><path d="M3 14l7-6 5 6-5 5z" fill="#e4584a" /><path d="M3 14l4 5 3 0-4-7z" fill="#f2cf33" /><path d="M11 10l9-7 2 2-7 8z" fill="#a0743a" /></T>
            <T s={17} c="w-[25px]"><rect x="4" y="7" width="13" height="14" fill="#f0f0f0" stroke="#777" /><rect x="7" y="3" width="7" height="5" fill="none" stroke="#777" /><rect x="9" y="9" width="4" height="8" fill="#7090b5" /><circle cx="18" cy="19" r="3.5" fill="#5b9a4c" /></T>
            <T s={17} c="w-[25px]"><path d="M1 11q10-9 20 0q-10 8-20 0z" fill="#d5dce5" stroke="#999" /><circle cx="11" cy="11" r="4.5" fill="#5f86b4" /><circle cx="11" cy="11" r="2" fill="#222" /><path d="M17 19h7l-3.5 3z" fill="#444" /></T>
            <T s={17} c="w-[24px]"><path d="M3 3h16v3l-6 6v8l-4-2v-6L3 6z" fill="#6b90bc" /><path d="M3 3h16v3H3z" fill="#f2cf33" /><path d="M15 19h7l-3.5 3z" fill="#444" /></T>
            <T s={17} c="w-[22px]"><path d="M13 5q-9-2-9 3q0 2 3 2q-5 1-3 5q2 2 6 1" fill="none" stroke="#c9c9c9" strokeWidth="1.6" /><path d="M12 13h9v8h-2v-5h-5v5h-2z" fill="#d0d0d0" /></T>
            <Dd dark c="w-[12px]" />
            <div className="w-[6px] shrink-0" />
            <T s={17} c="w-[26px]"><path d="M3 4h8v15H3z" fill="#f4f4f4" stroke="#999" /><rect x="2" y="7" width="3" height="3" fill="#ee9a24" /><rect x="8" y="13" width="3" height="3" fill="#ee9a24" /><path d="M14 3v12h-4l6 7 6-7h-4V3z" fill="#4a78a8" /></T>
            <T s={17} c="w-[24px]"><path d="M3 5h8v15H3z" fill="#f4f4f4" stroke="#999" /><rect x="2" y="8" width="3" height="3" fill="#ee9a24" /><rect x="8" y="14" width="3" height="3" fill="#ee9a24" /><path d="M15 22V10h-4l6-7 6 7h-4v12z" fill="#4a78a8" /></T>
            <T s={17} c="w-[25px]"><rect x="4" y="3" width="14" height="15" fill="#f8f8f8" stroke="#777" /><rect x="13" y="15" width="9" height="6" rx="1" fill="#e8483c" /><path d="M15 18h5" stroke="#fff" strokeWidth="1.4" /></T>
          </div>
          <div className="flex-1 bg-white border border-[#b4b4b4] overflow-hidden">
            <div className="h-[19px] flex items-center bg-[#137bdc]">
              <Arrow open c="ml-[7px] !border-t-[#123a66]" />
              <div className="ml-[9px] w-[14px] h-[14px] bg-white border border-[#888] flex items-center justify-center">
                <svg width="10" height="10" viewBox="0 0 10 10"><path d="M1.5 5l2.5 3.5L8.5 1" fill="none" stroke="#000" strokeWidth="1.8" /></svg>
              </div>
              <svg width="14" height="14" viewBox="0 0 14 14" className="ml-[7px]">
                <rect width="14" height="14" fill="#9cc3ea" />
                <path d="M0 0h4.600v4.600H0zM9.300 0H14v4.600H9.300zM4.600 4.600h4.700v4.700H4.600zM0 9.300h4.600V14H0z" fill="#1f3c5e" />
                <path d="M4.600 9.300h4.700V14H4.600z" fill="#e6eef7" />
              </svg>
              <span className="ml-[7px] text-white underline">香港</span>
            </div>
            <div className="h-[18px] flex items-center pl-[43px] whitespace-nowrap">波段 1 (Gray)</div>
            <div className="flex pl-[43px]">
              <div className="w-[16px] h-[96px] bg-gradient-to-b from-white to-black" />
              <div className="h-[96px] ml-[5px] py-[1px] flex flex-col justify-between text-[11px] leading-[12px] font-['Liberation_Sans',sans-serif]">
                <span>936</span>
                <span>−49</span>
              </div>
            </div>
          </div>
        </div>

        {/* map */}
        <div className="flex-1 min-w-0 flex flex-col bg-white border-x border-b border-[#b4b4b4] relative">
          <div className="h-[28px] mt-[1px] shrink-0 flex items-center bg-[#e3f2fd] border-b border-[#bcd0e4] pl-[9px] text-[#1c4d9e]">
            <div className="w-[25px] h-[14px] rounded-[3px] bg-[#9da5ad] border border-[#444] flex items-center justify-center gap-[2px]">
              <div className="w-[3px] h-[9px] bg-[#222]" /><div className="w-[3px] h-[9px] bg-[#222]" />
            </div>
            <svg width="20" height="20" viewBox="0 0 20 20" className="ml-[8px]">
              <path d="M3 1h14a2 2 0 0 1 2 2v9a2 2 0 0 1-2 2H9l-4 5v-5H3a2 2 0 0 1-2-2V3a2 2 0 0 1 2-2z" fill="#fff" stroke="#9aa0a6" />
            </svg>
            <span className="ml-[12px] pt-[2px] font-bold text-[13px]">无活动矢量图层</span>
            <span className="w-[14px] pl-[3px] pt-[2px]">:</span>
            <span className="whitespace-nowrap pt-[2px] text-[11.7px]">在图例中选择一个矢量图层方可全选。</span>
            <div className="ml-auto flex flex-col gap-[1px] mr-[32px]">
              <div className="w-[14px] h-[10px] border-b border-r border-[#888] bg-[#f2f2f2]" />
              <div className="w-[14px] h-[10px] border-b border-r border-[#888] bg-[#f2f2f2]" />
            </div>
            <svg width="18" height="18" viewBox="0 0 18 18" className="mr-[22px]">
              <circle cx="9" cy="9" r="8.5" fill="#2b2b2b" />
              <path d="M5.5 5.5l7 7M12.5 5.5l-7 7" stroke="#fff" strokeWidth="2.4" />
            </svg>
          </div>
          <div className="flex-1" />
          <HongKong />
        </div>

        {/* processing toolbox */}
        <div className="w-[261px] shrink-0 flex flex-col pl-[7px]">
          <div className="h-[22px] shrink-0 flex items-center justify-between pl-[3px] pr-[2px]"><span>工具箱</span><DockBtns /></div>
          <div className="h-[30px] shrink-0 flex items-center pl-[3px] pb-[3px]">
            <T s={18} c="w-[25px]"><circle cx="8" cy="8" r="5.5" fill="#d62020" stroke="#d62020" strokeDasharray="2 1" strokeWidth="3" /><circle cx="15" cy="13" r="3.5" fill="#777" stroke="#777" strokeDasharray="1.5 1" strokeWidth="2" /><circle cx="9" cy="18" r="3" fill="#7a9fcb" /><path d="M16 20h6l-3 3z" fill="#444" /></T>
            <T s={18} c="w-[25px]"><path d="M11 3q5-1 5 2v4H9v1h9q3 0 3 4t-3 4h-2v-3q0-2-3-2H8q-2 0-2-2V6q0-2 5-3z" fill="#3c74a8" /><path d="M6 10H4q-2 0-2 4t2 4h2v3q2 1 6 1t4-2v-4H8q-2 0-2-2z" fill="#f2cf33" /><path d="M17 20h6l-3 3z" fill="#444" /></T>
            <T s={18} c="w-[24px]"><circle cx="12" cy="12" r="9.5" fill="#f6f6f6" stroke="#a5a5a5" strokeWidth="1.4" /><path d="M12 5v7l4 4" stroke="#a5a5a5" fill="none" /></T>
            <T s={18} c="w-[24px]"><path d="M5 2h10l4 4v16H5z" fill="#f6f6f6" stroke="#b5b5b5" /><path d="M8 9h8M8 13h8M8 17h8" stroke="#b5b5b5" /></T>
            <div className="w-[6px] shrink-0" /><Sep />
            <T s={18} c="w-[29px]"><path d="M4 3h12v12l-4 6-2-6H4z" fill="#d6d6d0" /><path d="M16 4q5 3 2 9l-2 2z" fill="#e4e4de" /></T>
            <Sep />
            <T s={18} c="w-[30px]">
              <path d="M5 2q4-1 5 3l11 13-3 4L7 9Q2 7 3 3l3 3 2-2z" fill="#d8d8d8" stroke="#777" strokeWidth=".8" />
              <path d="M12 10l9 8-3 4-8-9z" fill="#e8c23a" stroke="#8a7420" strokeWidth=".6" />
            </T>
          </div>
          <div className="h-[21px] shrink-0 bg-white border border-[#b0b0b0] rounded-[3px] flex items-center pl-[8px] text-[#8a8a8a]">
            <svg width="14" height="14" viewBox="0 0 14 14" fill="none" stroke="#888" strokeWidth="1.3"><circle cx="5.5" cy="5.5" r="4.5" /><path d="M9 9l4 4" /></svg>
            <span className="ml-[7px] tracking-[1px]">搜索...</span>
          </div>
          <div className="flex-1 bg-white border border-[#b4b4b4] overflow-hidden">
            <div className="h-[19px] flex items-center whitespace-nowrap">
              <div className="w-[18px] flex justify-center shrink-0"><Arrow /></div>
              <svg width="16" height="16" viewBox="0 0 16 16" className="ml-[4px] shrink-0"><circle cx="8" cy="8" r="7" fill="#f6f6f6" stroke="#a5a5a5" strokeWidth="1.2" /><path d="M8 3.5V8l3 2.5" stroke="#a5a5a5" fill="none" /></svg>
              <span className="ml-[6px]">最近用过</span>
            </div>
            {toolboxRows.map((t) => (
              <div key={t} className="h-[19px] flex items-center whitespace-nowrap">
                <div className="w-[18px] flex justify-center shrink-0"><Arrow /></div>
                <div className="ml-[4px]"><Q /></div>
                <span className="ml-[6px]">{t}</span>
              </div>
            ))}
            <div className="h-[19px] flex items-center whitespace-nowrap">
              <div className="w-[18px] flex justify-center shrink-0"><Arrow /></div>
              <svg width="16" height="16" viewBox="0 0 16 16" className="ml-[4px] shrink-0">
                <circle cx="9" cy="7" r="5.5" fill="#5d9bc8" /><path d="M6 6q3-3 6 0q-2 3-6 0z" fill="#7aa050" /><path d="M1 1l5 4" stroke="#333" />
                <text x="8" y="15.5" fontSize="6.5" fontWeight="bold" textAnchor="middle" fontFamily="Liberation Sans" fill="#111">GDAL</text>
              </svg>
              <span className="ml-[6px]">GDAL</span>
            </div>
          </div>
        </div>
      </div>

      {/* status bar */}
      <div className="h-[28px] shrink-0 flex items-center text-[11px] relative">
        <div className="ml-[4px] w-[199px] h-[21px] bg-white border border-[#b0b0b0] rounded-[3px] flex items-center pl-[8px] text-[#8a8a8a] shrink-0">
          <svg width="14" height="14" viewBox="0 0 14 14" fill="none" stroke="#888" strokeWidth="1.3"><circle cx="5.5" cy="5.5" r="4.5" /><path d="M9 9l4 4" /></svg>
          <span className="ml-[7px] whitespace-nowrap font-['Liberation_Mono','Noto_Sans_CJK_SC',monospace]">搜索 (Ctrl+K)</span>
        </div>
        <span className="ml-[10px] text-[10px] tracking-[0.3px] whitespace-nowrap">1 个图例条目已移除。</span>
        <div className="ml-auto flex items-center">
          <span className="w-[24px] whitespace-nowrap shrink-0">坐标</span>
          <div className="ml-[1px] w-[104px] h-[21px] bg-white border border-[#b0b0b0] rounded-[3px] flex items-center justify-center text-[10px] font-['Liberation_Mono',monospace] whitespace-nowrap shrink-0">832012, 2460234</div>
          <div className="w-[24px] flex justify-center shrink-0">
            <svg width="18" height="18" viewBox="0 0 18 18"><circle cx="9" cy="10" r="6" fill="#dfe7ef" stroke="#222" /><path d="M3 2l12 15M6 2l8 14M11 2l3 6" stroke="#222" strokeWidth="1.3" /></svg>
          </div>
          <span className="ml-[10px] w-[24px] whitespace-nowrap shrink-0">比例</span>
          <div className="w-[83px] h-[21px] bg-white border border-[#b0b0b0] rounded-[3px] flex items-center shrink-0">
            <span className="flex-1 pl-[3px] text-[10px] font-['Liberation_Mono',monospace]">1:329557</span>
            <div className="w-[20px] h-full border-l border-[#d0d0d0] flex items-center justify-center"><div className="w-0 h-0 border-x-[4px] border-x-transparent border-t-[4px] border-t-[#555]" /></div>
          </div>
          <div className="w-[33px] flex justify-center shrink-0">
            <svg width="14" height="22" viewBox="0 0 14 22"><path d="M3.5 10V6a3.5 3.5 0 0 1 7 0v4" fill="none" stroke="#777" strokeWidth="1.6" /><rect x="1" y="10" width="12" height="11" rx="1.5" fill="#7a7a7a" /></svg>
          </div>
          <span className="w-[37px] whitespace-nowrap shrink-0">放大镜</span>
          <Spin value="100%" c="w-[88px]" />
          <span className="ml-[9px] w-[46px] whitespace-nowrap shrink-0">旋转角度</span>
          <Spin value="0.0°" c="ml-[8px] w-[88px]" />
          <div className="ml-[6px] w-[14px] h-[14px] bg-white border border-[#888] flex items-center justify-center shrink-0">
            <svg width="10" height="10" viewBox="0 0 10 10"><path d="M1.5 5l2.5 3.5L8.5 1" fill="none" stroke="#000" strokeWidth="1.8" /></svg>
          </div>
          <span className="ml-[5px] w-[24px] whitespace-nowrap shrink-0">渲染</span>
          <div className="w-[24px] flex justify-center shrink-0">
            <svg width="16" height="16" viewBox="0 0 16 16"><GlobeArt cx={8} cy={8} r={6.5} fill="#999" land="#e5e5e5" stroke="#555" /></svg>
          </div>
          <span className="ml-[8px] w-[62px] whitespace-nowrap shrink-0 font-['Liberation_Mono',monospace] text-[10px]">EPSG:32649</span>
          <div className="w-[49px] flex justify-end pr-[4px] shrink-0">
            <svg width="22" height="22" viewBox="0 0 22 22"><path d="M11 3a8 7 0 0 1 5 12.5l2 4.5-6-3a8 7 0 0 1-1-14z" fill="#4a4a4a" /></svg>
          </div>
        </div>
        {/* csdn watermark */}
        <span className="absolute right-[17px] bottom-[2px] text-[18.5px] leading-[22px] text-[#666]/60 whitespace-nowrap font-['Liberation_Sans','Noto_Sans_CJK_SC',sans-serif]">CSDN @锅巴小透明</span>
      </div>
    </div>
  );
}
